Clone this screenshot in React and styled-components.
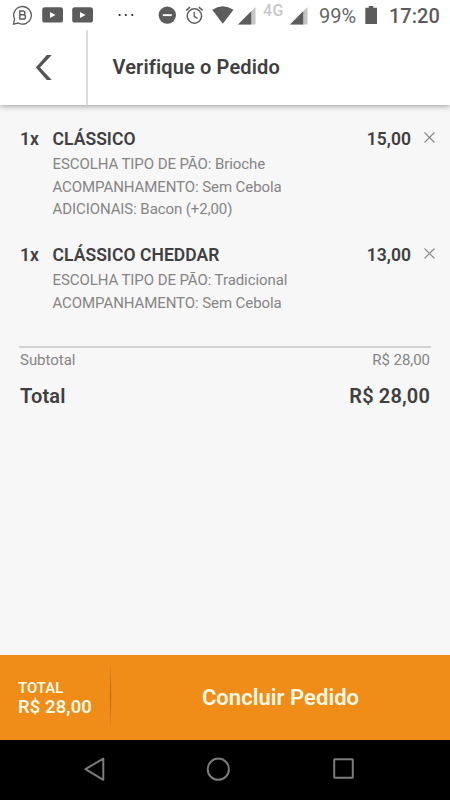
import React from "react";
import styled, { createGlobalStyle } from "styled-components";

const items = [
  {
    qty: "1x",
    name: "CLÁSSICO",
    price: "15,00",
    options: [
      "ESCOLHA TIPO DE PÃO: Brioche",
      "ACOMPANHAMENTO: Sem Cebola",
      "ADICIONAIS: Bacon (+2,00)",
    ],
  },
  {
    qty: "1x",
    name: "CLÁSSICO CHEDDAR",
    price: "13,00",
    options: ["ESCOLHA TIPO DE PÃO: Tradicional", "ACOMPANHAMENTO: Sem Cebola"],
  },
];

const YoutubeIcon = () => (
  <svg width="22" height="16" viewBox="0 0 22 16">
    <rect x="0.2" y="0.3" width="20.8" height="15.2" rx="2.6" fill="#5c5c5c" />
    <path d="M8 5v6l5.5-3z" fill="#fff" />
  </svg>
);

const SignalIcon = () => (
  <svg width="18" height="18" viewBox="0 0 18 18">
    <path d="M17.5 0v17.5H0z" fill="#c4c4c4" />
    <path d="M13.2 4.3V17.5H0z" fill="#5c5c5c" />
  </svg>
);

const RemoveIcon = () => (
  <svg width="11" height="11" viewBox="0 0 11 11" fill="none" stroke="#868686" strokeWidth="1.1">
    <path d="M0.5 0.5l10 10M10.5 0.5l-10 10" />
  </svg>
);

export default function App() {
  return (
    <>
      <GlobalStyle />
      <Screen>
        <StatusBar>
          <StatusItem $left={12} $top={5}>
            <svg width="21" height="21" viewBox="0 0 21 21" fill="none" stroke="#5c5c5c">
              <path d="M2.6 14.2A8.8 8.8 0 1 1 6.2 18L1.5 19.1z" strokeWidth="1.3" />
              <path d="M7.8 6h3.2a1.9 1.9 0 0 1 0 3.8H7.8zM7.8 9.8h3.6a2.1 2.1 0 0 1 0 4.2H7.8z" strokeWidth="1.4" />
            </svg>
          </StatusItem>
          <StatusItem $left={9} $top={7}><YoutubeIcon /></StatusItem>
          <StatusItem $left={8} $top={7}><YoutubeIcon /></StatusItem>
          <StatusItem $left={24} $top={13}>
            <svg width="16" height="4" viewBox="0 0 16 4" fill="#222">
              <circle cx="1.6" cy="2" r="1.1" />
              <circle cx="7.8" cy="2" r="1.1" />
              <circle cx="14.3" cy="2" r="1.1" />
            </svg>
          </StatusItem>
          <StatusItem $left={24} $top={6}>
            <svg width="18" height="18" viewBox="0 0 18 18">
              <circle cx="9.3" cy="9.1" r="8.7" fill="#5c5c5c" />
              <rect x="4.8" y="8.2" width="9" height="1.9" fill="#fff" />
            </svg>
          </StatusItem>
          <StatusItem $left={9} $top={6}>
            <svg width="19" height="19" viewBox="0 0 19 19" fill="none" stroke="#5c5c5c">
              <circle cx="9.4" cy="10" r="7.2" strokeWidth="1.5" />
              <path d="M9.2 5.8v4.6l3.3 2" strokeWidth="1.3" />
              <path d="M1.2 4.5L5 1.2M17.7 4.5L13.9 1.2" strokeWidth="1.6" />
            </svg>
          </StatusItem>
          <StatusItem $left={8} $top={6}>
            <svg width="22" height="18" viewBox="0 0 22 18">
              <path d="M10.8 17.7L0.2 3.7Q10.8-3.3 21.5 3.7z" fill="#5c5c5c" />
            </svg>
          </StatusItem>
          <StatusItem $left={4} $top={7}><SignalIcon /></StatusItem>
          <Network>4G</Network>
          <StatusItem $left={7} $top={7}><SignalIcon /></StatusItem>
          <Percent>99%</Percent>
          <StatusItem $left={8} $top={6}>
            <svg width="12" height="18" viewBox="0 0 12 18">
              <path d="M3.8 0h4.5v1.7H12V18H0.3V1.7h3.5z" fill="#5c5c5c" />
            </svg>
          </StatusItem>
          <Clock>17:20</Clock>
        </StatusBar>

        <Header>
          <BackButton aria-label="Voltar">
            <svg width="18" height="25" viewBox="0 0 18 25" fill="#555">
              <path d="M12.8 0H17.8L6 12.5L17.8 25H12.8L1.8 12.5z" />
            </svg>
          </BackButton>
          <Title>Verifique o Pedido</Title>
        </Header>

        <Content>
          {items.map((item) => (
            <Item key={item.name}>
              <ItemHead>
                <Qty>{item.qty}</Qty>
                <Name>{item.name}</Name>
                <Price>{item.price}</Price>
                <RemoveButton aria-label="Remover"><RemoveIcon /></RemoveButton>
              </ItemHead>
              <Options>
                {item.options.map((option) => (
                  <li key={option}><span>{option}</span></li>
                ))}
              </Options>
            </Item>
          ))}
          <Summary>
            <Subtotal><span>Subtotal</span><span>R$ 28,00</span></Subtotal>
            <Total><span>Total</span><span>R$ 28,00</span></Total>
          </Summary>
        </Content>

        <Footer>
          <FooterTotal>
            <FooterLabel>TOTAL</FooterLabel>
            <FooterValue>R$ 28,00</FooterValue>
          </FooterTotal>
          <FooterDivider />
          <Finish>Concluir Pedido</Finish>
        </Footer>

        <NavBar>
          <svg width="22" height="26" viewBox="0 0 22 26" fill="none" stroke="#7b7b7b" strokeWidth="2">
            <path d="M20.3 2.6v21.2L2.4 13.2z" strokeLinejoin="round" />
          </svg>
          <svg width="26" height="26" viewBox="0 0 26 26" fill="none" stroke="#7b7b7b" strokeWidth="2">
            <circle cx="12.3" cy="13.2" r="10.6" />
          </svg>
          <svg width="22" height="26" viewBox="0 0 22 26" fill="none" stroke="#7b7b7b" strokeWidth="2">
            <rect x="2.2" y="3.2" width="18.6" height="18.6" rx="0.5" />
          </svg>
        </NavBar>
      </Screen>
    </>
  );
}

const GlobalStyle = createGlobalStyle`
  * { box-sizing: border-box; }
  body {
    margin: 0;
    font-family: Roboto, "Liberation Sans", sans-serif;
    background: #f7f7f7;
  }
  svg { display: block; flex: none; }
  button {
    border: 0;
    padding: 0;
    background: none;
    font-family: inherit;
    cursor: pointer;
  }
`
const Screen = styled.div`
  display: flex;
  flex-direction: column;
  width: 450px;
  height: 800px;
  overflow: hidden;
  background: #f7f7f7;
`
const StatusBar = styled.div`
  display: flex;
  align-items: flex-start;
  flex: none;
  height: 30px;
  background: #fff;
  white-space: nowrap;
`
const StatusItem = styled.div`
  flex: none;
  margin: ${(p) => p.$top}px 0 0 ${(p) => p.$left}px;
`
const Network = styled.span`
  width: 20px;
  margin: 2px 0 0 7px;
  font-size: 16px;
  line-height: 18px;
  font-weight: 500;
  letter-spacing: 0.5px;
  color: #c8c8c8;
`
const Percent = styled.span`
  width: 38px;
  margin: 4px 0 0 11px;
  font-size: 20px;
  line-height: 24px;
  color: #666;
`
const Clock = styled.span`
  margin: 4px 0 0 12px;
  font-size: 20px;
  line-height: 24px;
  font-weight: 500;
  color: #5c5c5c;
`
const Header = styled.header`
  display: flex;
  flex: none;
  height: 75px;
  background: #fff;
  box-shadow: 0 1px 6px rgba(0, 0, 0, 0.38);
  clip-path: inset(0 0 -10px 0);
`
const BackButton = styled.button`
  display: flex;
  align-items: center;
  width: 88px;
  padding-left: 34px;
  border-right: 2px solid #dcdcdc;
`
const Title = styled.h1`
  margin: 0 0 0 24.5px;
  font-size: 20px;
  line-height: 75px;
  font-weight: 600;
  letter-spacing: 0.13px;
  color: #404040;
`
const Content = styled.main`
  flex: 1;
  padding: 22px 14px 0 20px;
`
const Item = styled.section`
  margin-bottom: 22.5px;
`
const ItemHead = styled.div`
  display: flex;
  align-items: center;
  height: 24px;
  font-size: 17.5px;
  line-height: 24px;
  font-weight: 600;
  letter-spacing: 0.05px;
  color: #404040;
`
const Qty = styled.span`
  width: 32.5px;
`
const Name = styled.span`
  flex: 1;
`
const Price = styled.span`
  width: 45px;
  text-align: right;
  white-space: nowrap;
`
const RemoveButton = styled.button`
  margin: -3px 1px 0 13px;
`
const Options = styled.ul`
  margin: 2px 0 0;
  padding: 0 0 0 32.5px;
  list-style: none;
  font-size: 15px;
  line-height: 22.5px;
  letter-spacing: -0.08px;
  color: #858585;
`
const Summary = styled.div`
  width: 412px;
  margin: 32px 0 0 -1px;
  padding: 0 1px;
  border-top: 2px solid #d2d2d2;
`
const Subtotal = styled.div`
  display: flex;
  justify-content: space-between;
  font-size: 15px;
  line-height: 24px;
  letter-spacing: -0.03px;
  color: #858585;
`
const Total = styled.div`
  display: flex;
  justify-content: space-between;
  margin-top: 10px;
  font-size: 20px;
  line-height: 28px;
  font-weight: 600;
  letter-spacing: 0.15px;
  color: #404040;
`
const Footer = styled.footer`
  display: flex;
  flex: none;
  height: 85px;
  background: #f08c18;
  color: #fffbe6;
`
const FooterTotal = styled.div`
  width: 110px;
  padding: 24px 0 0 18px;
  white-space: nowrap;
`
const FooterLabel = styled.div`
  font-size: 14.9px;
  line-height: 18px;
  font-weight: 600;
`
const FooterValue = styled.div`
  font-size: 18.4px;
  line-height: 20px;
  font-weight: 600;
  letter-spacing: 0.1px;
`
const FooterDivider = styled.div`
  width: 1px;
  height: 66px;
  margin-top: 8px;
  background: linear-gradient(rgba(140, 85, 20, 0), rgba(140, 85, 20, 0.65) 50%, rgba(140, 85, 20, 0));
`
const Finish = styled.button`
  flex: 1;
  font-size: 22px;
  font-weight: 600;
  letter-spacing: 0.05px;
  color: #fffbe6;
`
const NavBar = styled.nav`
  display: flex;
  align-items: flex-start;
  justify-content: space-between;
  flex: none;
  height: 60px;
  padding: 16px 96px 0 83px;
  background: #000;
`
